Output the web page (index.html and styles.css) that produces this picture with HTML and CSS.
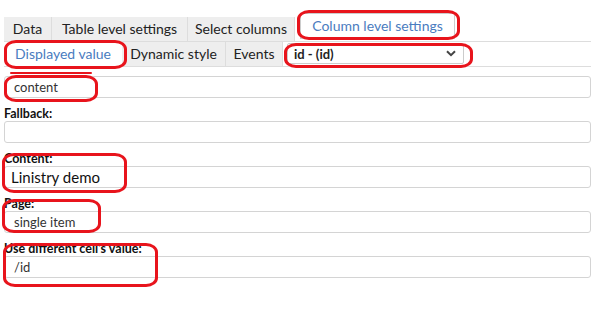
FILE: index.html
```html
<!DOCTYPE html>
<html>
<head>
<meta charset="utf-8">
<link rel="stylesheet" href="styles.css">
</head>
<body>
<div class="page">
  <div class="tabs tabs-top">
    <div class="tab t-data">Data</div>
    <div class="tab t-table">Table level settings</div>
    <div class="tab t-select">Select columns</div>
    <div class="tab active raised">Column level settings</div>
  </div>
  <div class="tabs tabs-sub">
    <div class="tab active t-disp">Displayed value</div>
    <div class="tab t-dyn">Dynamic style</div>
    <div class="tab t-ev">Events</div>
    <div class="select">
      <span>id - (id)</span>
      <svg class="chev" width="10" height="7" viewBox="0 0 10 7"><path d="M1 1.2 L5 5.2 L9 1.2" fill="none" stroke="#444" stroke-width="2"/></svg>
    </div>
  </div>
  <div class="field first">
    <div class="input">content</div>
  </div>
  <div class="field">
    <div class="label">Fallback:</div>
    <div class="input"></div>
  </div>
  <div class="field">
    <div class="label">Content:</div>
    <div class="input big">Linistry demo</div>
  </div>
  <div class="field">
    <div class="label">Page:</div>
    <div class="input">single item</div>
  </div>
  <div class="field">
    <div class="label">Use different cell's value:</div>
    <div class="input">/id</div>
  </div>

  <div class="mark m1"></div>
  <div class="mark m2"></div>
  <div class="mark m2b"></div>
  <div class="mark m3"></div>
  <div class="mark m4"></div>
  <div class="mark m5"></div>
  <div class="mark m6"></div>
  <div class="mark m7"></div>
</div>
</body>
</html>
```
FILE: styles.css
```css
html, body { margin: 0; padding: 0; background: #fff; }
body { font-family: "Lato", "Noto Sans", sans-serif; color: #222; }
.page { position: relative; width: 587px; padding: 17px 8px 0 4px; height: 295px; }

.tabs { display: flex; height: 24px; }
.tab {
  box-sizing: border-box; background: #eee; border-right: 1px solid #ddd;
  font-size: 14px; line-height: 24px; text-align: center; white-space: nowrap; color: #222;
}
.t-data { width: 48px; }
.t-table { width: 136px; }
.t-select { width: 107px; }
.tab.active { background: #fff; color: #4a7cc0; }
.tab.raised { border: 1px solid #ccc; margin-left: 5px; margin-top: -4px; height: 26px; line-height: 24px; width: 155px; }

.tabs-sub { border-top: 1px solid #ddd; border-bottom: 1px solid #ddd; height: 24px; }
.t-disp { width: 118px; border-right: none; }
.t-dyn { width: 104px; }
.t-ev { width: 57px; }
.select {
  box-sizing: border-box; margin: 1px 0 0 4px; width: 177px; height: 21px; border: 1px solid #ccc; border-radius: 2px;
  display: flex; align-items: center; justify-content: space-between; padding: 0 7px 0 6px;
  font-size: 13px; font-weight: bold; color: #222;
}

.field { display: flex; flex-direction: column; }
.field.first { margin-top: 9px; }
.label { font-size: 12.5px; font-weight: bold; color: #111; height: 15px; line-height: 15px; margin-top: 8px; }
.input {
  height: 20px; border: 1px solid #d4d4d4; border-radius: 3px; font-size: 13px; line-height: 20px;
  padding-left: 9px; color: #333;
}
.input.big { font-size: 15px; color: #111; padding-left: 6px; }

.mark { position: absolute; border: 3px solid #e8141c; border-radius: 12px / 9px; box-sizing: border-box; }
.m1 { left: 297px; top: 10px; width: 163px; height: 30px; }
.m2 { left: 4px; top: 40px; width: 123px; height: 29px; }
.m2b { left: 10px; top: 72px; width: 82px; height: 2px; border: none; background: #e8141c; border-radius: 1px; }
.m3 { left: 284px; top: 43px; width: 189px; height: 25px; }
.m4 { left: 4px; top: 75px; width: 94px; height: 27px; }
.m5 { left: 2px; top: 153px; width: 125px; height: 40px; }
.m6 { left: 2px; top: 199px; width: 99px; height: 34px; }
.m7 { left: 3px; top: 243px; width: 155px; height: 44px; }
```
